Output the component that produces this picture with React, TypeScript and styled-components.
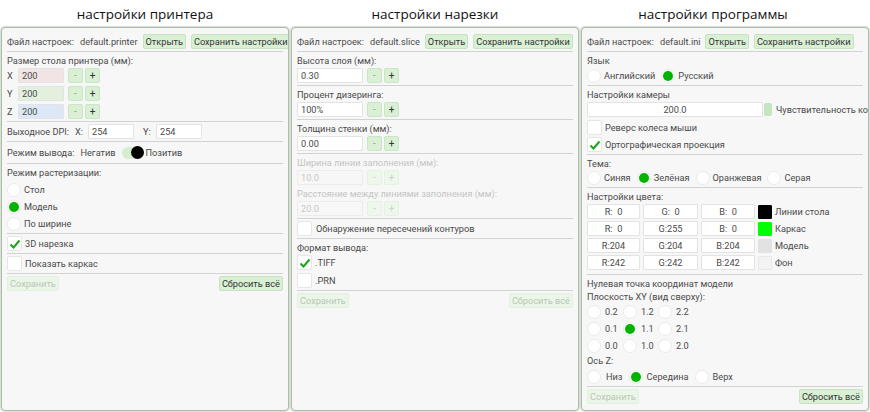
import React from "react";
import styled, { createGlobalStyle } from "styled-components";

const GlobalStyle = createGlobalStyle`
  html, body {
    margin: 0;
    padding: 0;
    background: #ffffff;
  }
  body {
    font-family: Roboto, "Liberation Sans", sans-serif;
  }
`;

const Page = styled.div`
  display: grid;
  grid-template-columns: repeat(3, 288px);
  column-gap: 2px;
  padding: 0 1px;
  width: 870px;
  height: 412px;
  box-sizing: border-box;
`;

const Column = styled.div`
  display: flex;
  flex-direction: column;
  min-width: 0;
`;

const Title = styled.div<{ $shift?: number }>`
  height: 27px;
  display: flex;
  align-items: center;
  justify-content: center;
  padding-right: ${(p) => p.$shift ?? 0}px;
  font-family: "Open Sans", "Noto Sans", sans-serif;
  font-size: 13.5px;
  color: #111;
`;

const Panel = styled.div`
  flex: 1;
  margin-bottom: 1px;
  border: 1px solid #adbba9;
  border-radius: 4px;
  box-shadow: 0 0 1px 1px rgba(165, 182, 160, 0.45);
  background: #f7f7f7;
  padding: 6px 5px 0;
  overflow: hidden;
  font-family: Roboto, "Liberation Sans", sans-serif;
  font-size: 9.2px;
  color: #4a4a4a;
`;

const HeaderRow = styled.div`
  display: flex;
  align-items: center;
  gap: 5px;
  height: 15px;
  white-space: nowrap;
`;

const Btn = styled.button<{ $off?: boolean }>`
  height: 15px;
  padding: 0 2px;
  border: 1px solid ${(p) => (p.$off ? "#e1f1df" : "#c6e3c2")};
  border-radius: 2px;
  background: ${(p) => (p.$off ? "#ebf6e9" : "#d9f0d5")};
  color: ${(p) => (p.$off ? "#b7c7b5" : "#333")};
  font: inherit;
  line-height: 13px;
  flex-shrink: 0;
  white-space: nowrap;
`;

const Sep = styled.div<{ $mt?: number }>`
  height: 1px;
  background: #d2d2d2;
  margin: ${(p) => p.$mt ?? 2}px 0 2px;
`;

const Label = styled.div<{ $off?: boolean; $mb?: number }>`
  height: 13px;
  line-height: 13px;
  margin-bottom: ${(p) => p.$mb ?? 1}px;
  white-space: nowrap;
  color: ${(p) => (p.$off ? "#c4c4c4" : "inherit")};
`;

const Stack = styled.div<{ $gap?: number }>`
  display: flex;
  flex-direction: column;
  gap: ${(p) => p.$gap ?? 3}px;
`;

const Row = styled.div<{ $gap?: number; $h?: number }>`
  display: flex;
  align-items: center;
  gap: ${(p) => p.$gap ?? 3}px;
  height: ${(p) => p.$h ?? 15}px;
  white-space: nowrap;
`;

const AxisName = styled.span`
  width: 8px;
`;

const Field = styled.div<{ $w: number; $bg?: string; $off?: boolean; $center?: boolean }>`
  width: ${(p) => p.$w}px;
  height: 15px;
  box-sizing: border-box;
  flex-shrink: 0;
  border: 1px solid #e3e3e3;
  border-radius: 1px;
  background: ${(p) => p.$bg ?? "#ffffff"};
  padding: 0 3px;
  line-height: 13px;
  white-space: pre;
  text-align: ${(p) => (p.$center ? "center" : "left")};
  color: ${(p) => (p.$off ? "#c8c8c8" : "#4a4a4a")};
  ${(p) => (p.$off ? "background: #f7f7f7; border-color: #ececec;" : "")}
`;

const StepBtn = styled.div<{ $off?: boolean; $dim?: boolean }>`
  width: 15px;
  height: 15px;
  box-sizing: border-box;
  flex-shrink: 0;
  border: 1px solid ${(p) => (p.$off ? "#e4f2e2" : "#cbe6c7")};
  border-radius: 2px;
  background: ${(p) => (p.$off ? "#edf7ec" : "#d9f0d5")};
  display: flex;
  align-items: center;
  justify-content: center;
  font-size: 10px;
  color: ${(p) => (p.$off ? "#c9d6c8" : p.$dim ? "#9aa99a" : "#333")};
`;

const Steps = styled.div`
  display: flex;
  gap: 2px;
  margin-left: 1px;
`;

const RadioCircle = styled.span<{ $on?: boolean }>`
  width: 14px;
  height: 14px;
  box-sizing: border-box;
  flex-shrink: 0;
  border-radius: 50%;
  border: 1px solid #ebebeb;
  background: #ffffff;
  display: flex;
  align-items: center;
  justify-content: center;
  &::after {
    content: "";
    width: 10px;
    height: 10px;
    border-radius: 50%;
    background: ${(p) => (p.$on ? "#00b400" : "transparent")};
  }
`;

const Choice = styled.span<{ $gap?: number }>`
  display: inline-flex;
  align-items: center;
  gap: ${(p) => p.$gap ?? 3}px;
  white-space: nowrap;
`;

const Box = styled.span`
  width: 15px;
  height: 15px;
  box-sizing: border-box;
  flex-shrink: 0;
  border: 1px solid #e6e6e6;
  border-radius: 2px;
  background: #ffffff;
  display: flex;
  align-items: center;
  justify-content: center;
`;

const Track = styled.span`
  width: 22px;
  height: 12px;
  border-radius: 6px;
  background: #d4eed0;
  display: flex;
  align-items: center;
  justify-content: flex-end;
`;

const Knob = styled.span`
  width: 13px;
  height: 13px;
  border-radius: 50%;
  background: #000;
`;

const Footer = styled.div`
  display: flex;
  justify-content: space-between;
  align-items: center;
  height: 15px;
`;

const Handle = styled.span`
  width: 8px;
  height: 13px;
  border-radius: 2px;
  background: #c3e6be;
  flex-shrink: 0;
`;

const Swatch = styled.span<{ $c: string; $edge?: boolean }>`
  width: 14px;
  height: 14px;
  box-sizing: border-box;
  flex-shrink: 0;
  background: ${(p) => p.$c};
  border: 1px solid ${(p) => (p.$edge ? "#e8e8e8" : p.$c)};
  border-radius: 1px;
`;

const Grid = styled.div`
  display: grid;
  grid-template-columns: 36px 35px 35px;
  row-gap: 2px;
`;

function Radio({ label, on, gap }: { label: string; on?: boolean; gap?: number }) {
  return (
    <Choice $gap={gap}>
      <RadioCircle $on={on} />
      {label}
    </Choice>
  );
}

function Check({ label, on, gap }: { label: string; on?: boolean; gap?: number }) {
  return (
    <Row $gap={gap ?? 3}>
      <Box>
        {on && (
          <svg width="12" height="12" viewBox="0 0 12 12">
            <polyline points="1.5,6.5 4.5,9.5 10.5,2.5" fill="none" stroke="#16a916" strokeWidth="2" />
          </svg>
        )}
      </Box>
      {label}
    </Row>
  );
}

function Stepper({ off, dimMinus }: { off?: boolean; dimMinus?: boolean }) {
  return (
    <Steps>
      <StepBtn $off={off} $dim={dimMinus}>-</StepBtn>
      <StepBtn $off={off}>+</StepBtn>
    </Steps>
  );
}

function Header({ file }: { file: string }) {
  return (
    <HeaderRow>
      <span style={{ marginRight: 1 }}>Файл настроек:</span>
      <span>{file}</span>
      <Btn>Открыть</Btn>
      <Btn>Сохранить настройки</Btn>
    </HeaderRow>
  );
}

const axes = [
  { name: "X", bg: "#f2e4e4" },
  { name: "Y", bg: "#e4f0de" },
  { name: "Z", bg: "#dce8f5" },
];

function PrinterPanel() {
  return (
    <Panel>
      <Header file="default.printer" />
      <Sep />
      <Label>Размер стола принтера (мм):</Label>
      <Stack>
        {axes.map((a) => (
          <Row key={a.name}>
            <AxisName>{a.name}</AxisName>
            <Field $w={46} $bg={a.bg}>200</Field>
            <Stepper dimMinus />
          </Row>
        ))}
      </Stack>
      <Sep />
      <Row $gap={6}>
        <span>Выходное DPI:</span>
        <span style={{ width: 7 }}>X:</span>
        <Field $w={46}>254</Field>
        <span style={{ marginLeft: 3, width: 7 }}>Y:</span>
        <Field $w={46}>254</Field>
      </Row>
      <Sep />
      <Row $h={17} $gap={6}>
        <span>Режим вывода:</span>
        <span>Негатив</span>
        <Track>
          <Knob />
        </Track>
        <span style={{ marginLeft: -4 }}>Позитив</span>
      </Row>
      <Sep />
      <Label $mb={3}>Режим растеризации:</Label>
      <Stack $gap={2}>
        <Row><Radio label="Стол" /></Row>
        <Row><Radio label="Модель" on /></Row>
        <Row><Radio label="По ширине" /></Row>
      </Stack>
      <Sep />
      <Check label="3D нарезка" on />
      <Sep />
      <Check label="Показать каркас" />
      <Sep />
      <Footer>
        <Btn $off>Сохранить</Btn>
        <Btn>Сбросить всё</Btn>
      </Footer>
    </Panel>
  );
}

function SliceField({ label, value, off }: { label: string; value: string; off?: boolean }) {
  return (
    <div>
      <Label $off={off}>{label}</Label>
      <Row>
        <Field $w={66} $off={off}>{value}</Field>
        <Stepper off={off} dimMinus />
      </Row>
    </div>
  );
}

function SlicePanel() {
  return (
    <Panel>
      <Header file="default.slice" />
      <Sep />
      <SliceField label="Высота слоя (мм):" value="0.30" />
      <Sep />
      <SliceField label="Процент дизеринга:" value="100%" />
      <Sep />
      <SliceField label="Толщина стенки (мм):" value="0.00" />
      <Sep />
      <Stack $gap={2}>
        <SliceField label="Ширина линии заполнения (мм):" value="10.0" off />
        <SliceField label="Расстояние между линиями заполнения (мм):" value="20.0" off />
      </Stack>
      <Sep />
      <Check label="Обнаружение пересечений контуров" gap={4} />
      <Sep />
      <Label>Формат вывода:</Label>
      <Stack>
        <Check label=".TIFF" on />
        <Check label=".PRN" />
      </Stack>
      <Sep />
      <Footer>
        <Btn $off>Сохранить</Btn>
        <Btn $off>Сбросить всё</Btn>
      </Footer>
    </Panel>
  );
}

const colors = [
  { r: "  0", g: "  0", b: "  0", c: "#000000", name: "Линии стола" },
  { r: "  0", g: "255", b: "  0", c: "#00ff00", name: "Каркас" },
  { r: "204", g: "204", b: "204", c: "#e2e2e2", name: "Модель" },
  { r: "242", g: "242", b: "242", c: "#f3f3f3", name: "Фон", edge: true },
];

const origin = ["0.2", "1.2", "2.2", "0.1", "1.1", "2.1", "0.0", "1.0", "2.0"];

function ProgramPanel() {
  return (
    <Panel>
      <Header file="default.ini" />
      <Sep />
      <Label>Язык</Label>
      <Row $gap={6}>
        <Radio label="Английский" />
        <Radio label="Русский" on />
      </Row>
      <Sep />
      <Label>Настройки камеры</Label>
      <Row $gap={1}>
        <Field $w={176} $center>200.0</Field>
        <Handle />
        <span style={{ marginLeft: 3 }}>Чувствительность колеса мыши</span>
      </Row>
      <Stack $gap={2} style={{ marginTop: 3 }}>
        <Check label="Реверс колеса мыши" />
        <Check label="Ортографическая проекция" on />
      </Stack>
      <Sep />
      <Label $mb={0}>Тема:</Label>
      <Row $gap={6}>
        <Radio label="Синяя" />
        <Radio label="Зелёная" on />
        <Radio label="Оранжевая" />
        <Radio label="Серая" />
      </Row>
      <Sep />
      <Label>Настройки цвета:</Label>
      <Stack $gap={2}>
        {colors.map((c) => (
          <Row key={c.name}>
            <Field $w={53} $center>R:{c.r}</Field>
            <Field $w={55} $center>G:{c.g}</Field>
            <Field $w={54} $center>B:{c.b}</Field>
            <Swatch $c={c.c} $edge={c.edge} />
            <span>{c.name}</span>
          </Row>
        ))}
      </Stack>
      <Sep $mt={4} />
      <Label $mb={0}>Нулевая точка координат модели</Label>
      <Label>Плоскость XY (вид сверху):</Label>
      <Grid>
        {origin.map((o) => (
          <Row key={o}>
            <Radio label={o} on={o === "1.1"} gap={4} />
          </Row>
        ))}
      </Grid>
      <Label style={{ marginTop: 1, marginBottom: 2 }}>Ось Z:</Label>
      <Row $gap={6}>
        <Radio label="Низ" gap={5} />
        <Radio label="Середина" on gap={4} />
        <Radio label="Верх" gap={4} />
      </Row>
      <Sep />
      <Footer>
        <Btn $off>Сохранить</Btn>
        <Btn>Сбросить всё</Btn>
      </Footer>
    </Panel>
  );
}

export default function App() {
  return (
    <>
      <GlobalStyle />
      <Page>
        <Column>
          <Title>настройки принтера</Title>
          <PrinterPanel />
        </Column>
        <Column>
          <Title>настройки нарезки</Title>
          <SlicePanel />
        </Column>
        <Column>
          <Title $shift={24}>настройки программы</Title>
          <ProgramPanel />
        </Column>
      </Page>
    </>
  );
}
